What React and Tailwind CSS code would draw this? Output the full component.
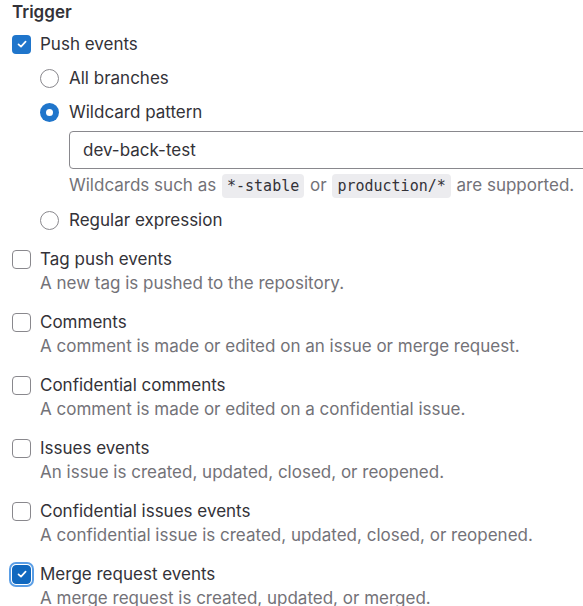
import React from "react";

function Check({ checked, focused }) {
  if (checked) {
    return (
      <span
        className={
          "flex h-[19px] w-[19px] shrink-0 items-center justify-center rounded-[4px] " +
          (focused
            ? "bg-[#1068bf] border border-[#1068bf] ring-[2px] ring-[#5a9ee6] ring-offset-[1px] ring-offset-white"
            : "bg-[#1f75cb]")
        }
      >
        <svg width="12" height="12" viewBox="0 0 12 12" fill="none">
          <path d="M2.5 6.3 L5 8.6 L9.6 3.6" stroke="white" strokeWidth="1.7" strokeLinecap="round" strokeLinejoin="round" />
        </svg>
      </span>
    );
  }
  return <span className="h-[19px] w-[19px] shrink-0 rounded-[4px] border border-[#89888d] bg-white" />;
}

function Radio({ checked }) {
  if (checked) {
    return (
      <span className="flex h-[19px] w-[19px] shrink-0 items-center justify-center rounded-full bg-[#1f75cb]">
        <span className="h-[7px] w-[7px] rounded-full bg-white" />
      </span>
    );
  }
  return <span className="h-[19px] w-[19px] shrink-0 rounded-full border border-[#89888d] bg-white" />;
}

function CheckItem({ label, desc, checked, focused }) {
  return (
    <div className="flex gap-[9px]">
      <div className="flex h-[24px] items-center">
        <Check checked={checked} focused={focused} />
      </div>
      <div>
        <div className="text-[#333238]">{label}</div>
        {desc && <div className="whitespace-nowrap text-[#737278]">{desc}</div>}
      </div>
    </div>
  );
}

function RadioItem({ label, checked }) {
  return (
    <div className="flex gap-[10px]">
      <div className="flex h-[24px] items-center">
        <Radio checked={checked} />
      </div>
      <div className="text-[#333238]">{label}</div>
    </div>
  );
}

const Code = ({ children }) => (
  <code className="mx-[1px] rounded-[4px] bg-[#ececef] px-[5px] py-[3px] font-['DejaVu_Sans_Mono',monospace] text-[15px] text-[#333238]">
    {children}
  </code>
);

export default function App() {
  return (
    <div className="h-[606px] w-[583px] overflow-hidden bg-white pl-[12px] font-['Inter',sans-serif] text-[17px] leading-[24px]">
      <div className="font-semibold text-[#333238]">Trigger</div>
      <div className="mt-[8px]">
        <CheckItem label="Push events" checked />
      </div>
      <div className="ml-[28px] mt-[10px] flex flex-col">
        <RadioItem label="All branches" />
        <div className="mt-[10px]">
          <RadioItem label="Wildcard pattern" checked />
        </div>
        <div className="ml-[29px] mt-[7px]">
          <div className="flex h-[38px] w-[560px] items-center rounded-[4px] border border-[#89888d] px-[13px] text-[#333238]">
            dev-back-test
          </div>
          <div className="mt-[4px] whitespace-nowrap text-[#737278]">
            Wildcards such as <Code>*-stable</Code> or <Code>production/*</Code> are supported.
          </div>
        </div>
        <div className="mt-[10px]">
          <RadioItem label="Regular expression" />
        </div>
      </div>
      <div className="mt-[15px] flex flex-col gap-[15px]">
        <CheckItem label="Tag push events" desc="A new tag is pushed to the repository." />
        <CheckItem label="Comments" desc="A comment is made or edited on an issue or merge request." />
        <CheckItem label="Confidential comments" desc="A comment is made or edited on a confidential issue." />
        <CheckItem label="Issues events" desc="An issue is created, updated, closed, or reopened." />
        <CheckItem label="Confidential issues events" desc="A confidential issue is created, updated, closed, or reopened." />
        <CheckItem label="Merge request events" desc="A merge request is created, updated, or merged." checked focused />
      </div>
    </div>
  );
}
